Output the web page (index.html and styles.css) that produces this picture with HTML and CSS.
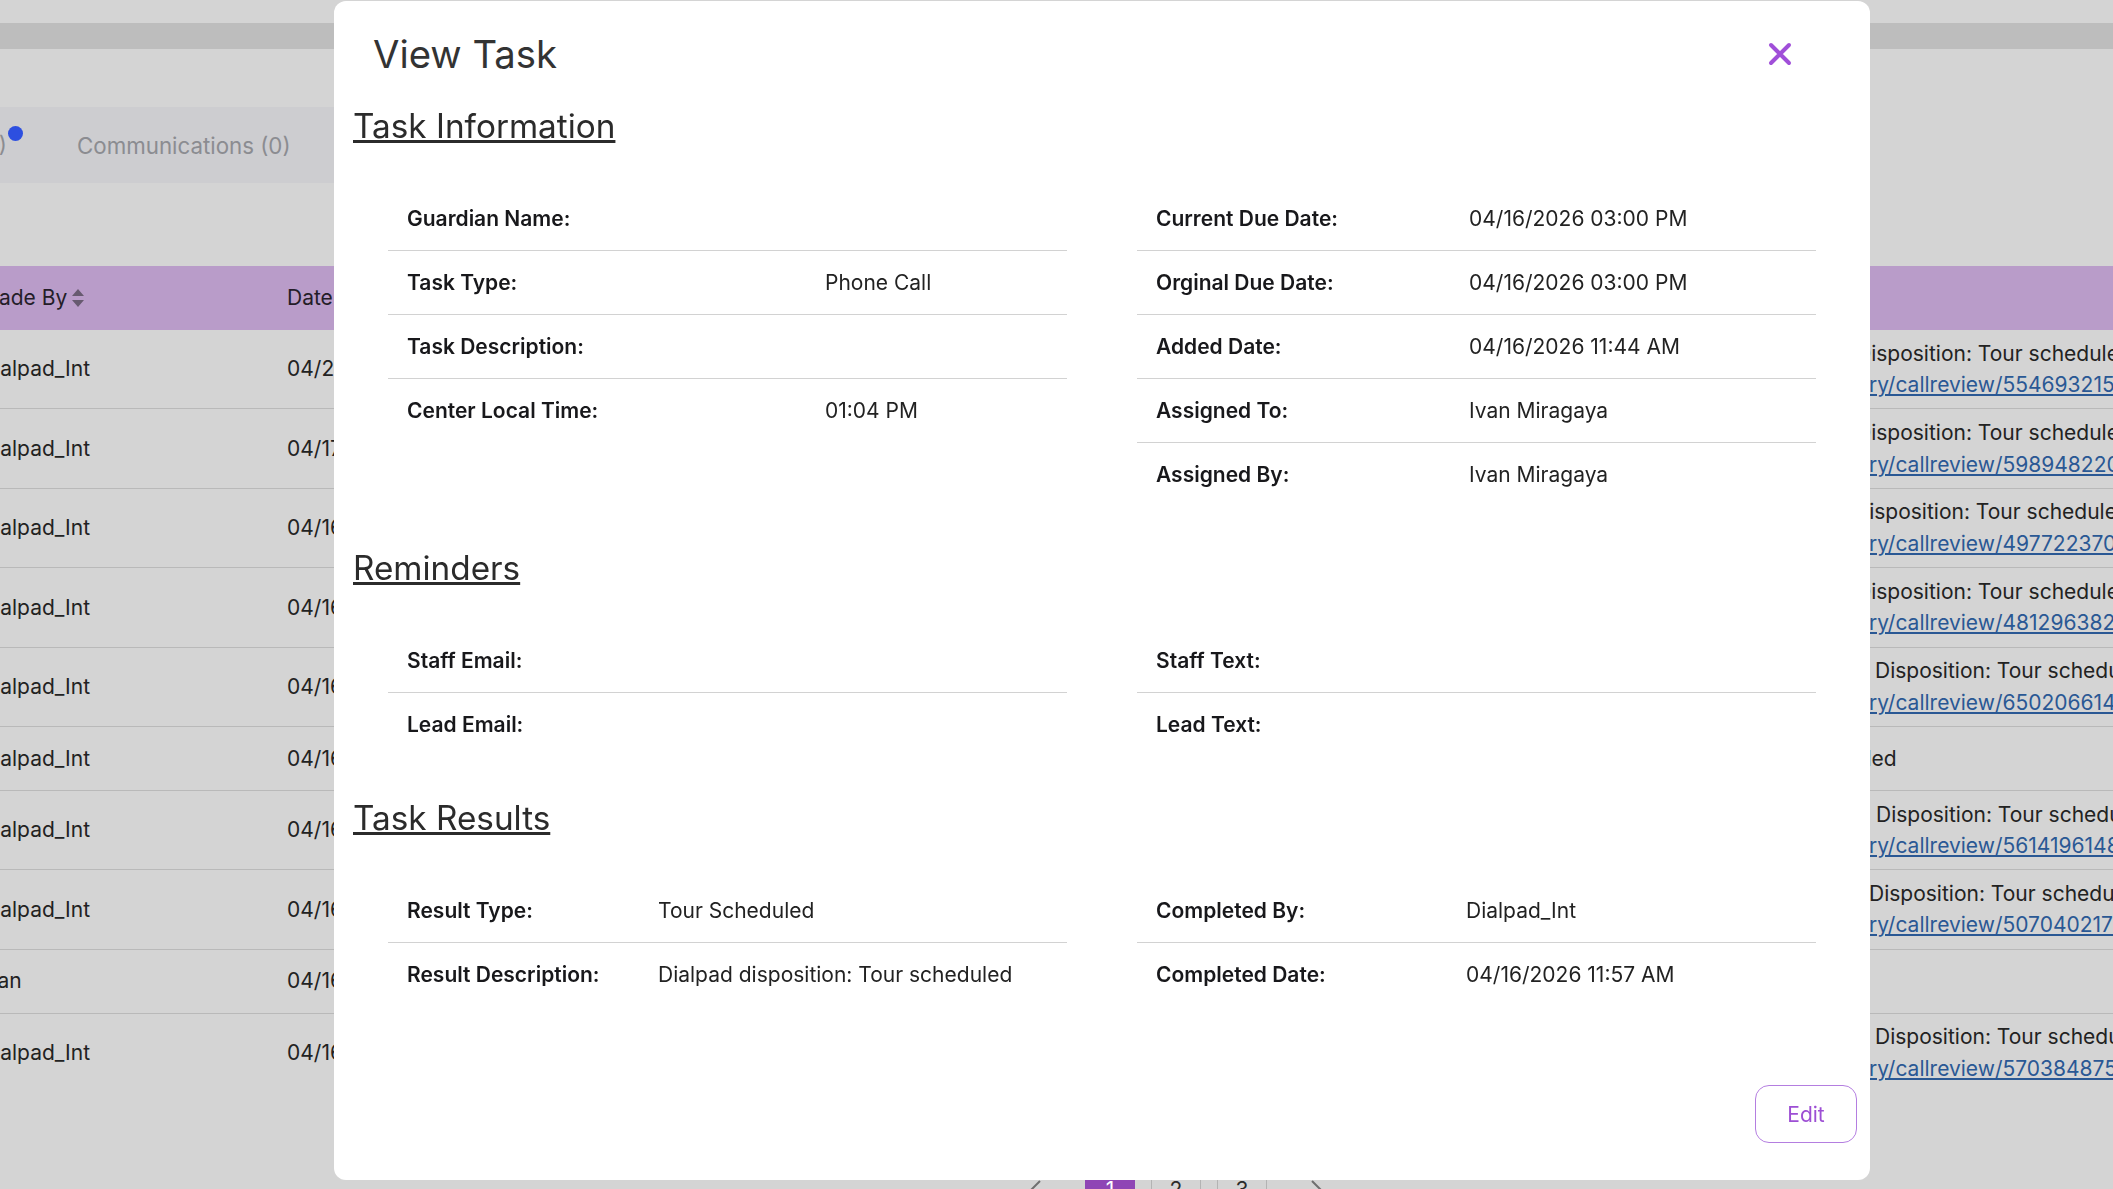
FILE: index.html
```html
<!DOCTYPE html>
<html lang="en">
<head>
<meta charset="utf-8">
<title>View Task</title>
<link rel="stylesheet" href="styles.css">
</head>
<body>
<div class="app">
  <header class="app-top"><div class="app-band"></div></header>

  <nav class="tabs">
    <div class="tab tab-first"><span class="tab-label">Tasks (4)<span class="dot"></span></span></div>
    <div class="tab">Communications (0)</div>
    <div class="tab">Documents (0)</div>
  </nav>

  <div class="log">
    <div class="log-row log-head">
      <div class="c-by">Made By <svg class="sort" viewBox="0 0 12 18" width="12" height="18"><path d="M6 0 12 7H0Z M0 11H12L6 18Z"/></svg></div>
      <div class="c-date">Date</div>
      <div class="c-type">Type</div>
      <div class="c-notes"></div>
    </div>
    <div class="log-row">
      <div>Dialpad_Int</div><div>04/21/2026 10:12 AM</div><div>Call</div>
      <div class="c-notes"><div class="n1 sh-d">Disposition: Tour scheduled</div><a class="n2" href="#">ry/callreview/5546932150464512</a></div>
    </div>
    <div class="log-row">
      <div>Dialpad_Int</div><div>04/17/2026 02:40 PM</div><div>Call</div>
      <div class="c-notes"><div class="n1 sh-d">Disposition: Tour scheduled</div><a class="n2" href="#">ry/callreview/5989482205069312</a></div>
    </div>
    <div class="log-row">
      <div>Dialpad_Int</div><div>04/16/2026 04:18 PM</div><div>Call</div>
      <div class="c-notes"><div class="n1 sh-i">Disposition: Tour scheduled</div><a class="n2" href="#">ry/callreview/4977223705575424</a></div>
    </div>
    <div class="log-row">
      <div>Dialpad_Int</div><div>04/16/2026 03:55 PM</div><div>Call</div>
      <div class="c-notes"><div class="n1 sh-d">Disposition: Tour scheduled</div><a class="n2" href="#">ry/callreview/4812963823910912</a></div>
    </div>
    <div class="log-row">
      <div>Dialpad_Int</div><div>04/16/2026 03:02 PM</div><div>Call</div>
      <div class="c-notes"><div class="n1 sh-6">Disposition: Tour scheduled</div><a class="n2" href="#">ry/callreview/6502066143739904</a></div>
    </div>
    <div class="log-row">
      <div>Dialpad_Int</div><div>04/16/2026 12:31 PM</div><div>Call</div>
      <div class="c-notes"><div class="n1 sh-ed">Scheduled</div></div>
    </div>
    <div class="log-row">
      <div>Dialpad_Int</div><div>04/16/2026 12:02 PM</div><div>Call</div>
      <div class="c-notes"><div class="n1 sh-7">Disposition: Tour scheduled</div><a class="n2" href="#">ry/callreview/5614196148240384</a></div>
    </div>
    <div class="log-row">
      <div>Dialpad_Int</div><div>04/16/2026 11:57 AM</div><div>Call</div>
      <div class="c-notes"><div class="n1">Disposition: Tour scheduled</div><a class="n2" href="#">ry/callreview/5070402170404864</a></div>
    </div>
    <div class="log-row">
      <div>Ivan</div><div>04/16/2026 11:44 AM</div><div>Task</div>
      <div class="c-notes"></div>
    </div>
    <div class="log-row">
      <div>Dialpad_Int</div><div>04/16/2026 11:20 AM</div><div>Call</div>
      <div class="c-notes"><div class="n1 sh-6">Disposition: Tour scheduled</div><a class="n2" href="#">ry/callreview/5703848759214080</a></div>
    </div>
  </div>

  <div class="pager">
    <span class="pg-arrow pg-prev"><svg viewBox="0 0 12 20" width="12" height="20"><path d="M10 2 2 10l8 8"/></svg></span>
    <span class="pg-num active">1</span>
    <span class="pg-num">2</span>
    <span class="pg-num">3</span>
    <span class="pg-arrow pg-next"><svg viewBox="0 0 12 20" width="12" height="20"><path d="M2 2l8 8-8 8"/></svg></span>
  </div>
</div>

<div class="modal" role="dialog" aria-label="View Task">
  <div class="modal-head">
    <h2 class="modal-title">View Task</h2>
    <button class="close" aria-label="Close">
      <svg viewBox="0 0 24 24" width="24" height="24"><path d="M3 3 21 21M21 3 3 21"/></svg>
    </button>
  </div>

  <div class="modal-body">
    <section class="block">
      <h3 class="block-title">Task Information</h3>
      <div class="cols">
        <div class="kv info-a">
          <div class="kv-row"><span class="k">Guardian Name:</span><span class="v"></span></div>
          <div class="kv-row"><span class="k">Task Type:</span><span class="v">Phone Call</span></div>
          <div class="kv-row"><span class="k">Task Description:</span><span class="v"></span></div>
          <div class="kv-row"><span class="k">Center Local Time:</span><span class="v">01:04 PM</span></div>
        </div>
        <div class="kv info-b">
          <div class="kv-row"><span class="k">Current Due Date:</span><span class="v">04/16/2026 03:00 PM</span></div>
          <div class="kv-row"><span class="k">Orginal Due Date:</span><span class="v">04/16/2026 03:00 PM</span></div>
          <div class="kv-row"><span class="k">Added Date:</span><span class="v">04/16/2026 11:44 AM</span></div>
          <div class="kv-row"><span class="k">Assigned To:</span><span class="v">Ivan Miragaya</span></div>
          <div class="kv-row"><span class="k">Assigned By:</span><span class="v">Ivan Miragaya</span></div>
        </div>
      </div>
    </section>

    <section class="block">
      <h3 class="block-title">Reminders</h3>
      <div class="cols">
        <div class="kv rem-a">
          <div class="kv-row"><span class="k">Staff Email:</span><span class="v"></span></div>
          <div class="kv-row"><span class="k">Lead Email:</span><span class="v"></span></div>
        </div>
        <div class="kv rem-b">
          <div class="kv-row"><span class="k">Staff Text:</span><span class="v"></span></div>
          <div class="kv-row"><span class="k">Lead Text:</span><span class="v"></span></div>
        </div>
      </div>
    </section>

    <section class="block">
      <h3 class="block-title">Task Results</h3>
      <div class="cols">
        <div class="kv res-a">
          <div class="kv-row"><span class="k">Result Type:</span><span class="v">Tour Scheduled</span></div>
          <div class="kv-row"><span class="k">Result Description:</span><span class="v">Dialpad disposition: Tour scheduled</span></div>
        </div>
        <div class="kv res-b">
          <div class="kv-row"><span class="k">Completed By:</span><span class="v">Dialpad_Int</span></div>
          <div class="kv-row"><span class="k">Completed Date:</span><span class="v">04/16/2026 11:57 AM</span></div>
        </div>
      </div>
    </section>
  </div>

  <div class="modal-foot">
    <button class="btn-edit">Edit</button>
  </div>
</div>
</body>
</html>
```

FILE: styles.css
```css
* { box-sizing: border-box; }

html, body {
  margin: 0;
  padding: 0;
}

body {
  width: 2113px;
  height: 1189px;
  overflow: hidden;
  position: relative;
  background: #d4d4d4;
  color: #222;
  font-family: Inter, "Noto Sans", "Liberation Sans", sans-serif;
  font-size: 21px;
}

/* ---------- page behind the dialog ---------- */
.app-top {
  height: 49px;
  padding-top: 23px;
}

.app-band {
  height: 26px;
  background: #bdbdbd;
}

.tabs {
  display: flex;
  width: fit-content;
  height: 76px;
  margin: 58px 0 0 -120px;
  background: #cdcdd0;
  font-size: 22.3px;
}

.tab {
  display: flex;
  align-items: center;
  padding: 0 35px;
  color: #8b8c91;
  white-space: nowrap;
}

.tab-first {
  width: 162px;
  justify-content: flex-end;
}

.tab-label {
  position: relative;
  line-height: 1;
}

.dot {
  position: absolute;
  right: -16px;
  top: -8px;
  width: 15px;
  height: 15px;
  border-radius: 50%;
  background: #2d4fe0;
}

.log {
  width: calc(100% + 36px);
  margin: 83px 0 0 -36px;
}

.log-row {
  display: grid;
  grid-template-columns: 307px 300px 1fr 244px;
  align-items: center;
  min-height: 64px;
  padding: 7.7px 0;
  line-height: 31.5px;
  border-bottom: 1px solid #b9b9b9;
  color: #222;
}

.log-row:last-child {
  border-bottom: 0;
}

.log-row > div {
  padding: 0 16px;
  white-space: nowrap;
  overflow: hidden;
}

.log-row > .c-notes {
  padding: 0;
}

.log-head {
  background: #b99cc9;
  border-bottom: 0;
  color: #241d28;
  padding: 0;
}

.c-by {
  display: flex;
  align-items: center;
  gap: 5px;
}

.sort {
  fill: #675a70;
  flex: none;
}

.n1 { white-space: nowrap; }
.sh-d { margin-left: -13px; }
.sh-i { margin-left: -15px; }
.sh-6 { margin-left: 6px; }
.sh-7 { margin-left: 7px; }
.sh-ed { margin-left: -78px; }

.n2 {
  display: block;
  color: #2a5894;
  text-decoration: underline;
  white-space: nowrap;
}

.pager {
  display: flex;
  align-items: center;
  gap: 16px;
  height: 50px;
  margin: 72px 0 0 1019px;
}

.pg-arrow {
  display: flex;
  align-items: center;
  justify-content: center;
  width: 34px;
  height: 50px;
}

.pg-arrow svg {
  fill: none;
  stroke: #6f6f6f;
  stroke-width: 2;
}

.pg-prev { margin-right: 16px; }
.pg-next { margin-left: 16px; }

.pg-num {
  display: flex;
  align-items: center;
  justify-content: center;
  width: 50px;
  height: 50px;
  border: 1px solid #b3b3b3;
  color: #2b2b2b;
}

.pg-num.active {
  background: #8f45b5;
  border-color: #8f45b5;
  color: #fff;
}

/* ---------- dialog ---------- */
.modal {
  position: fixed;
  left: 334px;
  top: 1px;
  width: 1536px;
  height: 1179px;
  display: flex;
  flex-direction: column;
  background: #fff;
  border-radius: 12px;
}

.modal-head {
  display: flex;
  align-items: center;
  justify-content: space-between;
  height: 48px;
  margin-top: 29px;
  padding: 0 78px 0 39px;
}

.modal-title {
  margin: 0;
  font-size: 38.3px;
  line-height: 48px;
  font-weight: 400;
  color: #333;
}

.close {
  display: flex;
  width: 24px;
  height: 24px;
  padding: 0;
  border: 0;
  background: none;
}

.close svg {
  stroke: #a04fd9;
  stroke-width: 4;
  stroke-linecap: round;
  fill: none;
}

.modal-body {
  padding: 0 20px;
}

.block-title {
  margin: 42px 0 41px -1px;
  font-size: 33.3px;
  line-height: 40px;
  font-weight: 400;
  color: #2b2b2b;
  text-decoration: underline;
}

.block:first-child .block-title {
  margin-top: 28px;
}

.cols {
  display: grid;
  grid-template-columns: 1fr 1fr;
  column-gap: 70px;
  align-items: start;
  padding: 0 34px;
}

.info-a { --label: 418px; }
.info-b { --label: 313px; }
.rem-a, .rem-b { --label: 313px; }
.res-a { --label: 251px; }
.res-b { --label: 310px; }

.kv-row {
  display: grid;
  grid-template-columns: var(--label) 1fr;
  padding: 15.75px 0;
  line-height: 31.5px;
  border-bottom: 1px solid #d2d2d2;
}

.kv-row:last-child {
  border-bottom: 0;
}

.k {
  padding: 0 19px;
  font-weight: 600;
  color: #18181b;
  white-space: nowrap;
}

.v {
  padding: 0 19px;
  color: #222;
  white-space: nowrap;
}

.modal-foot {
  display: flex;
  justify-content: flex-end;
  margin-top: auto;
  padding: 0 13px 37px;
}

.btn-edit {
  width: 102px;
  height: 58px;
  border: 1px solid #b47ee0;
  border-radius: 14px;
  background: #fff;
  color: #9d4fd4;
  font-family: Inter, "Noto Sans", sans-serif;
  font-size: 21px;
}
```
